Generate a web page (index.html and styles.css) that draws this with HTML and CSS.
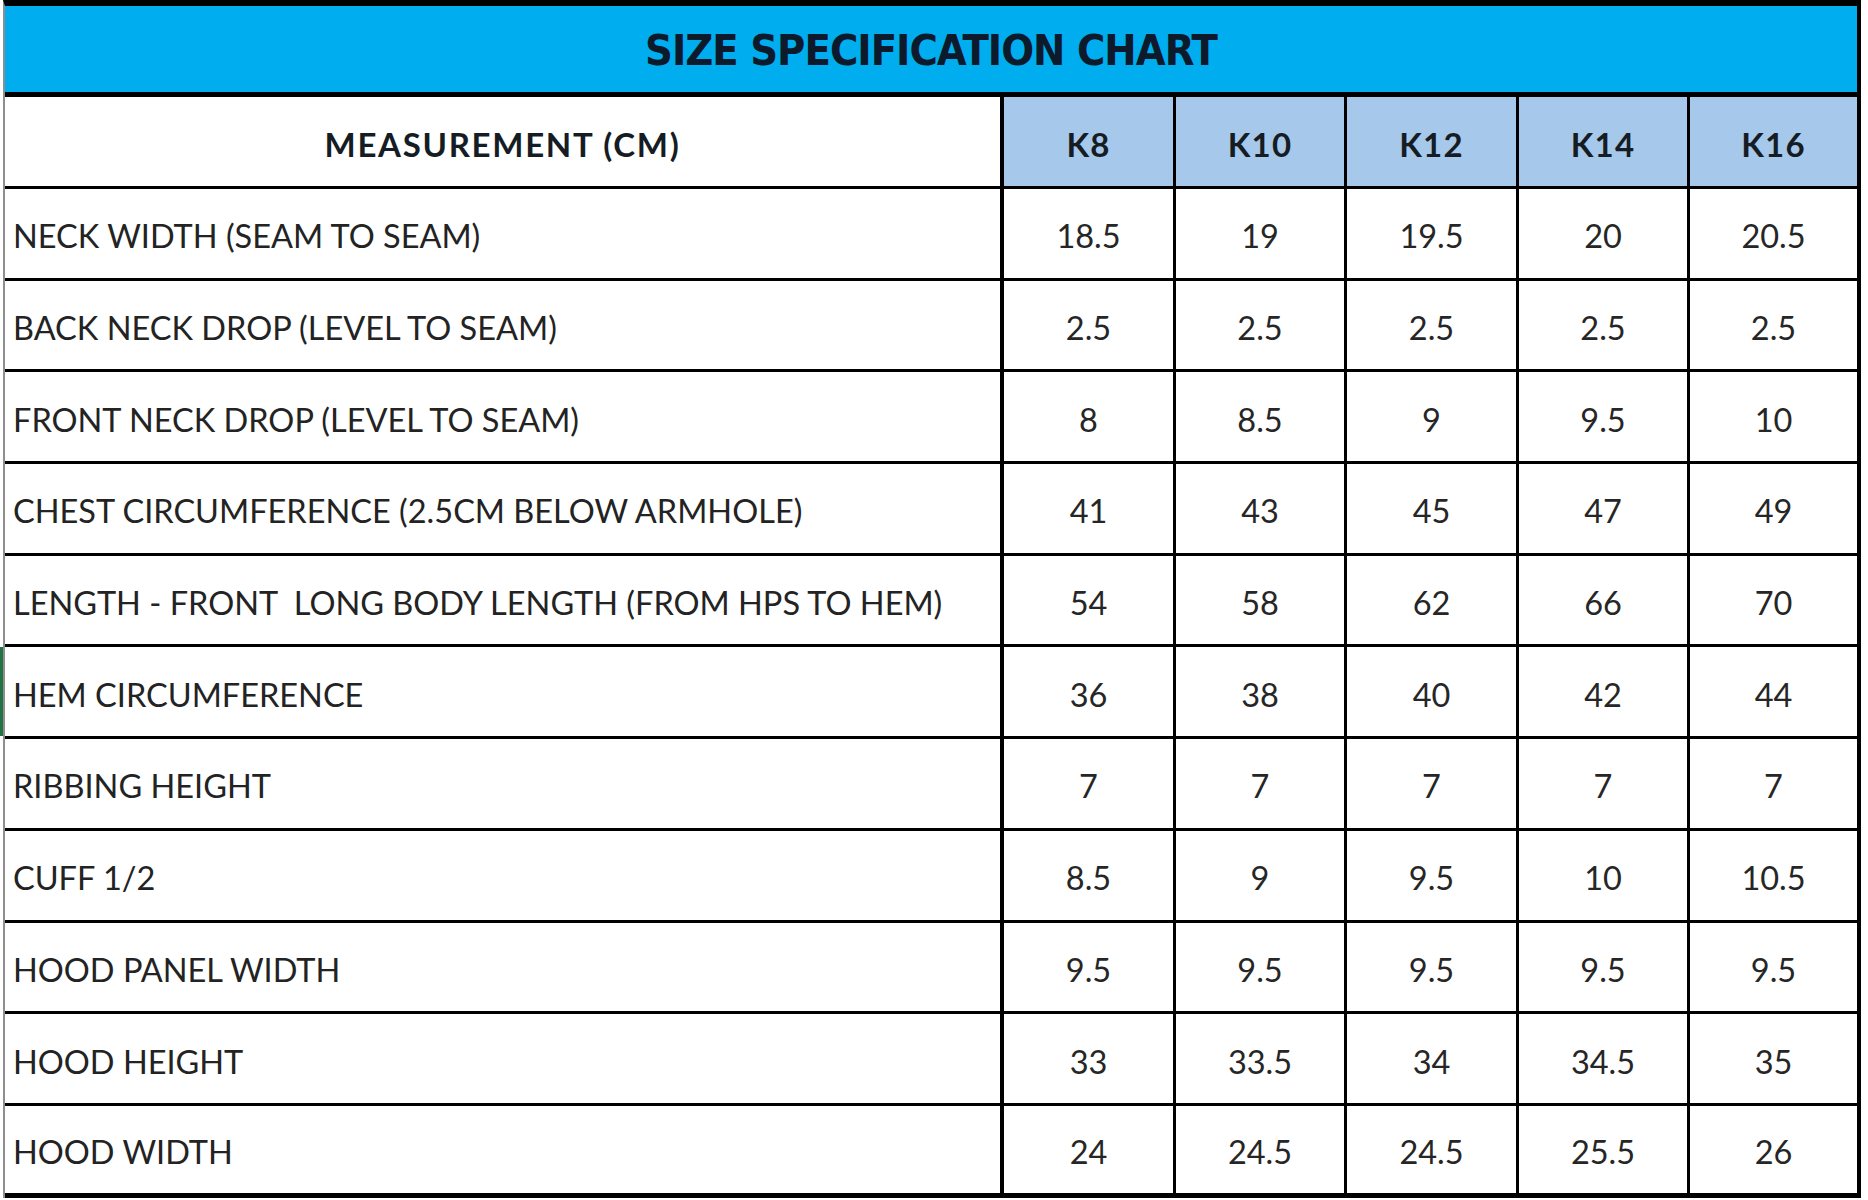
FILE: index.html
```html
<!DOCTYPE html>
<html lang="en">
<head>
<meta charset="utf-8">
<title>Size Specification Chart</title>
<link rel="stylesheet" href="styles.css">
</head>
<body>
<div class="chart">
  <div class="title"><span>SIZE SPECIFICATION CHART</span></div>

  <div class="cell head label-head">MEASUREMENT (CM)</div>
  <div class="cell head size">K8</div>
  <div class="cell head size">K10</div>
  <div class="cell head size">K12</div>
  <div class="cell head size">K14</div>
  <div class="cell head size last">K16</div>

  <div class="cell label">NECK WIDTH (SEAM TO SEAM)</div>
  <div class="cell num">18.5</div><div class="cell num">19</div><div class="cell num">19.5</div><div class="cell num">20</div><div class="cell num last">20.5</div>

  <div class="cell label">BACK NECK DROP (LEVEL TO SEAM)</div>
  <div class="cell num">2.5</div><div class="cell num">2.5</div><div class="cell num">2.5</div><div class="cell num">2.5</div><div class="cell num last">2.5</div>

  <div class="cell label">FRONT NECK DROP (LEVEL TO SEAM)</div>
  <div class="cell num">8</div><div class="cell num">8.5</div><div class="cell num">9</div><div class="cell num">9.5</div><div class="cell num last">10</div>

  <div class="cell label">CHEST CIRCUMFERENCE (2.5CM BELOW ARMHOLE)</div>
  <div class="cell num">41</div><div class="cell num">43</div><div class="cell num">45</div><div class="cell num">47</div><div class="cell num last">49</div>

  <div class="cell label">LENGTH - FRONT&nbsp; LONG BODY LENGTH (FROM HPS TO HEM)</div>
  <div class="cell num">54</div><div class="cell num">58</div><div class="cell num">62</div><div class="cell num">66</div><div class="cell num last">70</div>

  <div class="cell label selected">HEM CIRCUMFERENCE</div>
  <div class="cell num">36</div><div class="cell num">38</div><div class="cell num">40</div><div class="cell num">42</div><div class="cell num last">44</div>

  <div class="cell label">RIBBING HEIGHT</div>
  <div class="cell num">7</div><div class="cell num">7</div><div class="cell num">7</div><div class="cell num">7</div><div class="cell num last">7</div>

  <div class="cell label">CUFF 1/2</div>
  <div class="cell num">8.5</div><div class="cell num">9</div><div class="cell num">9.5</div><div class="cell num">10</div><div class="cell num last">10.5</div>

  <div class="cell label">HOOD PANEL WIDTH</div>
  <div class="cell num">9.5</div><div class="cell num">9.5</div><div class="cell num">9.5</div><div class="cell num">9.5</div><div class="cell num last">9.5</div>

  <div class="cell label">HOOD HEIGHT</div>
  <div class="cell num">33</div><div class="cell num">33.5</div><div class="cell num">34</div><div class="cell num">34.5</div><div class="cell num last">35</div>

  <div class="cell label bottom">HOOD WIDTH</div>
  <div class="cell num bottom">24</div><div class="cell num bottom">24.5</div><div class="cell num bottom">24.5</div><div class="cell num bottom">25.5</div><div class="cell num last bottom">26</div>
</div>
</body>
</html>
```

FILE: styles.css
```css
html, body {
  margin: 0;
  padding: 0;
  background: #ffffff;
}

body {
  padding-left: 3px;
  font-family: Lato, "Open Sans", "Liberation Sans", sans-serif;
  color: #222222;
}

.chart {
  box-sizing: border-box;
  width: 1858px;
  display: grid;
  grid-template-columns: 999px 172px 171px 172px 171px 167px;
  grid-template-rows: 91px 92px;
  grid-auto-rows: 91.7px;
  border-left: 2px solid #8e8e8e;
  border-right: 4px solid #000000;
  border-top: 6px solid #000000;
}

.title {
  grid-column: 1 / -1;
  box-sizing: border-box;
  background: #00adef;
  border-bottom: 5px solid #000000;
  display: flex;
  align-items: center;
  justify-content: center;
  padding-top: 2px;
}

.title span {
  font-family: "DejaVu Sans", sans-serif;
  font-stretch: condensed;
  font-weight: 700;
  font-size: 43px;
  color: #0d1a2b;
  letter-spacing: -1px;
}

.cell {
  position: relative;
  box-sizing: border-box;
  border-bottom: 3px solid #000000;
  border-right: 3px solid #000000;
  display: flex;
  align-items: center;
  font-size: 32.5px;
}

.cell.last {
  border-right: none;
}

.cell.label,
.cell.label-head {
  border-right: 4px solid #000000;
}

.head {
  font-weight: 700;
  font-size: 33px;
  letter-spacing: 1.2px;
  color: #151c24;
  justify-content: center;
  padding-top: 5px;
}

.head.label-head {
  letter-spacing: 1.7px;
}

.head.size {
  background: #a6c8ea;
}

.label {
  padding-left: 8px;
  padding-top: 5px;
  color: #232323;
}

.num {
  justify-content: center;
  padding-top: 5px;
  color: #262626;
}

.bottom {
  border-bottom-width: 5px;
}

.selected::before {
  content: "";
  position: absolute;
  left: -5px;
  top: 0;
  width: 3px;
  height: 100%;
  background: #217346;
}
```
